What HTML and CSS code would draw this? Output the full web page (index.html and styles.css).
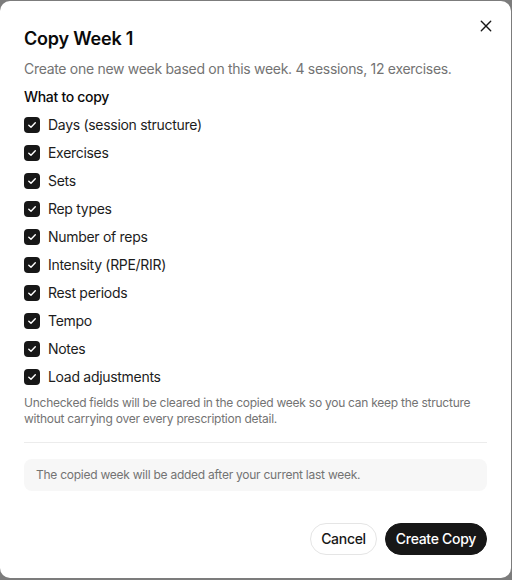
FILE: index.html
```html
<!DOCTYPE html>
<html lang="en">
<head>
<meta charset="utf-8">
<title>Copy Week 1</title>
<link rel="stylesheet" href="styles.css">
</head>
<body>
<div class="dialog" role="dialog" aria-labelledby="dlg-title">
  <button class="close" aria-label="Close">
    <svg width="12" height="12" viewBox="0 0 12 12" fill="none" stroke="#171717" stroke-width="1.4" stroke-linecap="round"><path d="M1.3 1.3 10.7 10.7M10.7 1.3 1.3 10.7"/></svg>
  </button>
  <h2 id="dlg-title" class="title">Copy Week 1</h2>
  <p class="subtitle">Create one new week based on this week. 4 sessions, 12 exercises.</p>
  <div class="section-label">What to copy</div>
  <ul class="options">
    <li class="option"><span class="box"><svg width="10" height="10" viewBox="0 0 10 10" fill="none" stroke="#fff" stroke-width="1.4" stroke-linecap="round" stroke-linejoin="round"><path d="M1.8 5.2 4 7.3 8.3 2.8"/></svg></span>Days (session structure)</li>
    <li class="option"><span class="box"><svg width="10" height="10" viewBox="0 0 10 10" fill="none" stroke="#fff" stroke-width="1.4" stroke-linecap="round" stroke-linejoin="round"><path d="M1.8 5.2 4 7.3 8.3 2.8"/></svg></span>Exercises</li>
    <li class="option"><span class="box"><svg width="10" height="10" viewBox="0 0 10 10" fill="none" stroke="#fff" stroke-width="1.4" stroke-linecap="round" stroke-linejoin="round"><path d="M1.8 5.2 4 7.3 8.3 2.8"/></svg></span>Sets</li>
    <li class="option"><span class="box"><svg width="10" height="10" viewBox="0 0 10 10" fill="none" stroke="#fff" stroke-width="1.4" stroke-linecap="round" stroke-linejoin="round"><path d="M1.8 5.2 4 7.3 8.3 2.8"/></svg></span>Rep types</li>
    <li class="option"><span class="box"><svg width="10" height="10" viewBox="0 0 10 10" fill="none" stroke="#fff" stroke-width="1.4" stroke-linecap="round" stroke-linejoin="round"><path d="M1.8 5.2 4 7.3 8.3 2.8"/></svg></span>Number of reps</li>
    <li class="option"><span class="box"><svg width="10" height="10" viewBox="0 0 10 10" fill="none" stroke="#fff" stroke-width="1.4" stroke-linecap="round" stroke-linejoin="round"><path d="M1.8 5.2 4 7.3 8.3 2.8"/></svg></span>Intensity (RPE/RIR)</li>
    <li class="option"><span class="box"><svg width="10" height="10" viewBox="0 0 10 10" fill="none" stroke="#fff" stroke-width="1.4" stroke-linecap="round" stroke-linejoin="round"><path d="M1.8 5.2 4 7.3 8.3 2.8"/></svg></span>Rest periods</li>
    <li class="option"><span class="box"><svg width="10" height="10" viewBox="0 0 10 10" fill="none" stroke="#fff" stroke-width="1.4" stroke-linecap="round" stroke-linejoin="round"><path d="M1.8 5.2 4 7.3 8.3 2.8"/></svg></span>Tempo</li>
    <li class="option"><span class="box"><svg width="10" height="10" viewBox="0 0 10 10" fill="none" stroke="#fff" stroke-width="1.4" stroke-linecap="round" stroke-linejoin="round"><path d="M1.8 5.2 4 7.3 8.3 2.8"/></svg></span>Notes</li>
    <li class="option"><span class="box"><svg width="10" height="10" viewBox="0 0 10 10" fill="none" stroke="#fff" stroke-width="1.4" stroke-linecap="round" stroke-linejoin="round"><path d="M1.8 5.2 4 7.3 8.3 2.8"/></svg></span>Load adjustments</li>
  </ul>
  <p class="help">Unchecked fields will be cleared in the copied week so you can keep the structure without carrying over every prescription detail.</p>
  <hr class="sep">
  <div class="info">The copied week will be added after your current last week.</div>
  <div class="footer">
    <button class="btn btn-outline">Cancel</button>
    <button class="btn btn-primary">Create Copy</button>
  </div>
</div>
</body>
</html>
```

FILE: styles.css
```css
* { box-sizing: border-box; }
html, body {
  margin: 0;
  padding: 0;
  height: 580px;
  overflow: hidden;
}
body {
  background: #7c7c7c;
  font-family: Inter, "Noto Sans", sans-serif;
  color: #171717;
  padding-top: 1px;
}
.dialog {
  position: relative;
  width: 511px;
  height: 577px;
  background: #fff;
  border-radius: 10px;
  padding: 24px 24px 23px;
  display: flex;
  flex-direction: column;
}
.close {
  position: absolute;
  top: 18px;
  right: 18px;
  width: 14px;
  height: 14px;
  padding: 1px;
  border: 0;
  background: none;
  display: flex;
  align-items: center;
  justify-content: center;
  cursor: pointer;
}
.title {
  margin: 0;
  font-size: 18px;
  line-height: 28px;
  font-weight: 600;
  color: #0a0a0a;
  letter-spacing: -0.2px;
}
.subtitle {
  margin: 6px 0 0;
  font-size: 14px;
  line-height: 20px;
  color: #737373;
  letter-spacing: -0.3px;
}
.section-label {
  margin-top: 8px;
  font-size: 14px;
  line-height: 20px;
  font-weight: 500;
  color: #0a0a0a;
  letter-spacing: -0.3px;
}
.options {
  list-style: none;
  margin: 8px 0 0;
  padding: 0;
  display: flex;
  flex-direction: column;
  gap: 8px;
}
.option {
  display: flex;
  align-items: center;
  gap: 8px;
  font-size: 14px;
  line-height: 20px;
  color: #1c1c1c;
  letter-spacing: -0.3px;
}
.box {
  width: 16px;
  height: 16px;
  border-radius: 4px;
  background: #171717;
  display: flex;
  align-items: center;
  justify-content: center;
  flex: none;
}
.help {
  margin: 8px 0 0;
  font-size: 12px;
  line-height: 16px;
  color: #737373;
  letter-spacing: -0.25px;
}
.sep {
  margin: 15px 0 0;
  border: 0;
  border-top: 1px solid #ececec;
}
.info {
  margin-top: 16px;
  padding: 8px 12px;
  background: #f7f7f7;
  border-radius: 8px;
  font-size: 12px;
  line-height: 16px;
  color: #737373;
  letter-spacing: -0.25px;
}
.footer {
  margin-top: auto;
  display: flex;
  justify-content: flex-end;
  gap: 8px;
}
.btn {
  height: 32px;
  padding: 0 10px;
  border-radius: 999px;
  font-family: inherit;
  font-size: 14px;
  font-weight: 500;
  line-height: 20px;
  letter-spacing: -0.3px;
}
.btn-outline {
  background: #fff;
  border: 1px solid #e5e5e5;
  color: #171717;
}
.btn-primary {
  background: #171717;
  border: 1px solid #171717;
  color: #fff;
}
```
